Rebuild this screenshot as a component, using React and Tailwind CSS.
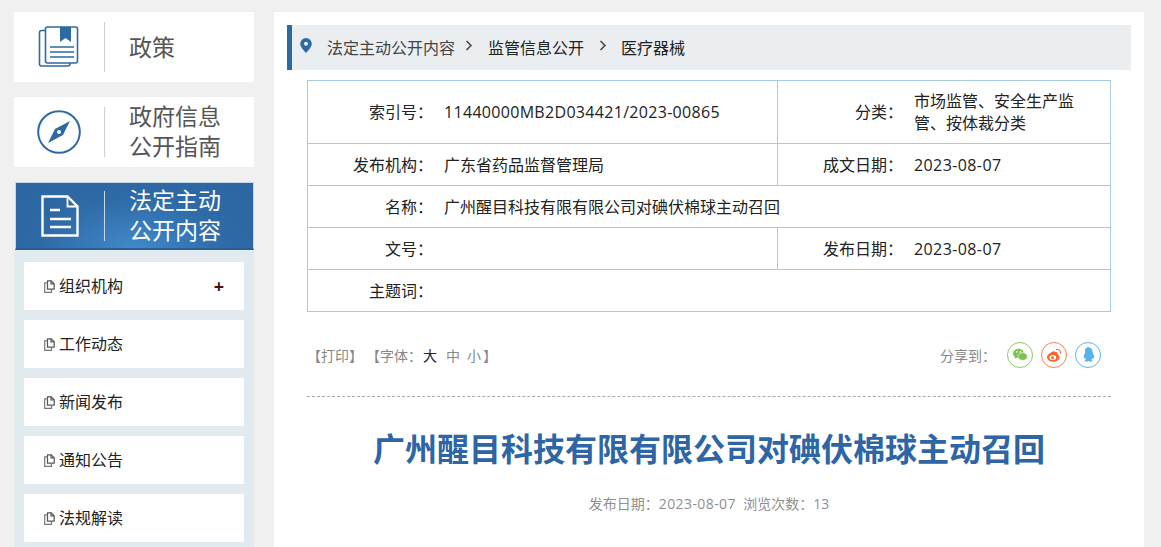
import React from "react";

function Doc() {
  return (
    <svg width="11" height="13" viewBox="0 0 11 13" fill="none" stroke="#555" strokeWidth="1.2" className="shrink-0">
      <path d="M3.5 .8h3.700l3 3v5.400h-6.700z" />
      <path d="M7 .8v3h3" />
      <path d="M3.500 2.800H.7v9.500h6.800v-3" stroke="#777" />
    </svg>
  );
}

const Divider = ({ light }) => (
  <div className={`w-px h-[50px] shrink-0 ${light ? "bg-[#c9d6e4]" : "bg-[#cfcfcf]"}`} />
);

function TopCard({ icon, children, textClass = "" }) {
  return (
    <div className="h-[70px] bg-white flex items-center">
      <div className="w-[90px] flex justify-center shrink-0">{icon}</div>
      <Divider />
      <div className={`pl-[24px] text-[23px] leading-[30px] text-[#555] ${textClass}`}>{children}</div>
    </div>
  );
}

function Item({ children, plus }) {
  return (
    <div className="h-[48px] bg-white flex items-center pl-5 pr-5 text-[16px] text-[#222]">
      <Doc />
      <span className="ml-1">{children}</span>
      {plus && <span className="ml-auto text-[18px] font-bold leading-none text-[#411]">+</span>}
    </div>
  );
}

const Label = ({ children, w = "w-[125px]" }) => (
  <div className={`${w} shrink-0 text-right`}>{children}</div>
);

function Row({ className = "h-[42px]", children }) {
  return <div className={`flex items-center border-b border-[#a9c9e2] ${className}`}>{children}</div>;
}

const Sep = () => <div className="w-px self-stretch bg-[#a9c9e2] shrink-0" />;

export default function App() {
  return (
    <div
      className="h-[547px] overflow-hidden bg-[#f0f0f0] flex pt-3 pl-[14px] text-[16px]"
      style={{ fontFamily: '"Open Sans","Noto Sans CJK SC",sans-serif' }}
    >
      <aside className="w-[240px] shrink-0 flex flex-col">
        <TopCard
          icon={
            <svg width="42" height="42" viewBox="0 0 42 42" fill="none" stroke="#2d6aa3" strokeWidth="1.6" className="mr-[1px]">
              <path d="M7 4.500H3.500a2 2 0 0 0-2 2V38a2 2 0 0 0 2 2H30a2 2 0 0 0 2-2v-1" />
              <rect x="7.500" y="1" width="32" height="36" rx="2" />
              <path d="M22 1h11v15l-5.500-4-5.500 4z" fill="#2d6aa3" stroke="none" />
              <path d="M12 21h24M12 26h24M12 31h24" strokeWidth="1.3" />
            </svg>
          }
        >
          政策
        </TopCard>
        <div className="mt-[15px]">
          <TopCard
            textClass="-mt-[3px]"
            icon={
              <svg width="44" height="44" viewBox="0 0 44 44" fill="none" className="mr-[1px]">
                <circle cx="22" cy="22" r="20.800" stroke="#2d6aa3" strokeWidth="2" />
                <path d="M33 11 L18 19 L11 33 L26 25 Z" fill="#2d6aa3" />
                <circle cx="22" cy="22" r="2" fill="#fff" />
              </svg>
            }
          >
            政府信息<br />公开指南
          </TopCard>
        </div>
        <div className="mt-[15px] h-[68px] border border-[#c5d8e6] border-b-2 border-b-[#2a5f95] flex items-center ml-px text-white bg-[radial-gradient(ellipse_at_50%_100%,#4189cb_0%,#2e6aa6_55%,#2c65a2_100%)]">
          <div className="w-[88px] flex justify-center shrink-0">
            <svg width="38" height="42" viewBox="0 0 38 42" fill="none" stroke="#fff" strokeWidth="2.400" className="mr-[1px]">
              <path d="M1.500 1.500h25l10 10v29h-35z" />
              <path d="M26.500 1.500v10h10" strokeWidth="1.800" />
              <path d="M9 15h10M9 24h21M9 32h21" />
            </svg>
          </div>
          <Divider light />
          <div className="pl-[24px] -mt-[2px] text-[23px] leading-[30px]">法定主动<br />公开内容</div>
        </div>
        <div className="bg-[#e0eaef] px-[10px] pt-3 flex flex-col gap-[10px] flex-1">
          <Item plus>组织机构</Item>
          <Item>工作动态</Item>
          <Item>新闻发布</Item>
          <Item>通知公告</Item>
          <Item>法规解读</Item>
        </div>
      </aside>

      <main className="ml-5 w-[870px] shrink-0 bg-white pt-[13px] px-[13px]">
        <div className="h-[45px] bg-[#ebeef1] border-l-[5px] border-[#2d6aa3] flex items-center pl-[8px] text-[#333]">
          <svg width="12" height="15" viewBox="0 0 12 15" className="shrink-0 -mt-1">
            <path fillRule="evenodd" d="M6 0a5.800 5.800 0 0 1 5.800 5.800C11.800 9.500 6 15 6 15S.2 9.500.2 5.800A5.800 5.800 0 0 1 6 0zm0 3.800a2 2 0 1 0 0 4 2 2 0 0 0 0-4z" fill="#2d6aa3" />
          </svg>
          <span className="ml-[15px] text-[#444]">法定主动公开内容</span>
          <svg width="8" height="11" viewBox="0 0 8 11" fill="none" stroke="#444" strokeWidth="1.500" className="ml-[10px] -mt-1"><path d="M1.500 1l4.500 4.500L1.500 10" /></svg>
          <span className="ml-[15px] text-[#222]">监管信息公开</span>
          <svg width="8" height="11" viewBox="0 0 8 11" fill="none" stroke="#444" strokeWidth="1.500" className="ml-[15px] -mt-1"><path d="M1.500 1l4.500 4.500L1.500 10" /></svg>
          <span className="ml-[14px] text-[#222]">医疗器械</span>
        </div>

        <div className="mx-5 mt-[10px]">
          <div className="border border-[#a9c9e2] border-b-0 text-[#222]">
            <Row className="h-[63px]">
              <Label>索引号：</Label>
              <div className="w-[344px] pl-[11px] shrink-0 tracking-[0.31px]">11440000MB2D034421/2023-00865</div>
              <Sep />
              <Label>分类：</Label>
              <div className="pl-[11px] w-[181px] leading-[22px]">市场监管、安全生产监管、按体裁分类</div>
            </Row>
            <Row>
              <Label>发布机构：</Label>
              <div className="w-[344px] pl-[11px] shrink-0">广东省药品监督管理局</div>
              <Sep />
              <Label>成文日期：</Label>
              <div className="pl-[11px] tracking-[0.4px]">2023-08-07</div>
            </Row>
            <Row>
              <Label>名称：</Label>
              <div className="pl-[11px]">广州醒目科技有限有限公司对碘伏棉球主动召回</div>
            </Row>
            <Row>
              <Label>文号：</Label>
              <div className="w-[344px] pl-[11px] shrink-0" />
              <Sep />
              <Label>发布日期：</Label>
              <div className="pl-[11px] tracking-[0.4px]">2023-08-07</div>
            </Row>
            <Row>
              <Label>主题词：</Label>
            </Row>
          </div>

          <div className="h-[85px] flex items-start border-b border-dashed border-[#aaa] pt-[34px] text-[14px] leading-[20px] text-[#888]">
            <span>【打印】</span>
            <span className="ml-[3px]">【字体：</span>
            <span className="ml-[1px] text-[#223]">大</span>
            <span className="ml-[9px]">中</span>
            <span className="ml-[7px]">小</span>
            <span className="ml-[2px]">】</span>
            <span className="ml-auto mr-[11px]">分享到：</span>
            <div className="flex gap-2 -mt-[4px] mr-[10px]">
              <span className="w-[26px] h-[26px] rounded-full border border-[#8ccb5e] flex items-center justify-center">
                <svg width="16" height="14" viewBox="0 0 20 18">
                  <ellipse cx="8" cy="7" rx="7" ry="6" fill="#7cc24b" />
                  <path d="M4 11l-1 3 4-2z" fill="#7cc24b" />
                  <ellipse cx="13.500" cy="11" rx="6" ry="5" fill="#7cc24b" stroke="#fff" strokeWidth=".8" />
                  <circle cx="6" cy="5" r="1" fill="#fff" />
                  <circle cx="10.500" cy="5" r="1" fill="#fff" />
                </svg>
              </span>
              <span className="w-[26px] h-[26px] rounded-full border border-[#ff7f4d] flex items-center justify-center">
                <svg width="17" height="15" viewBox="0 0 20 18">
                  <ellipse cx="8.500" cy="11" rx="7.500" ry="5.500" fill="#f8662c" />
                  <path d="M3 9c3-5 7-6 8-4 3-1 3 2 2 4z" fill="#f8662c" />
                  <ellipse cx="8" cy="11.500" rx="4" ry="3" fill="#fff" />
                  <circle cx="7.500" cy="11.700" r="1.700" fill="#f8662c" />
                  <path d="M12 2c3-1 6 1 5 5" fill="none" stroke="#f8662c" strokeWidth="1.300" />
                </svg>
              </span>
              <span className="w-[26px] h-[26px] rounded-full border border-[#5db5ea] flex items-center justify-center">
                <svg width="13" height="16" viewBox="0 0 16 19">
                  <path d="M8 0c3.500 0 5 2.700 5 6 0 1 1.800 3 2 6 .2 2-1 2-2 .8 0 1.200-.6 2-1.500 2.800 1 .4 1.500 1 1 1.600-.8.8-3 .5-4.500-.2-1.500.7-3.700 1-4.500.2-.5-.6 0-1.200 1-1.600C4.600 14.800 4 14 4 12.800c-1 1.200-2.200 1.200-2-.8.200-3 2-5 2-6C3 2.700 4.500 0 8 0z" fill="#55b4ec" />
                </svg>
              </span>
            </div>
          </div>

          <h1 className="mt-[31px] text-center text-[32px] leading-[42px] font-bold text-[#2d65a5]">
            广州醒目科技有限有限公司对碘伏棉球主动召回
          </h1>
          <div className="mt-[23px] text-center text-[14px] text-[#8f8f8f]">
            发布日期：<span className="tracking-[0.4px]">2023-08-07</span>&nbsp;&nbsp;浏览次数：13
          </div>
        </div>
      </main>
    </div>
  );
}
